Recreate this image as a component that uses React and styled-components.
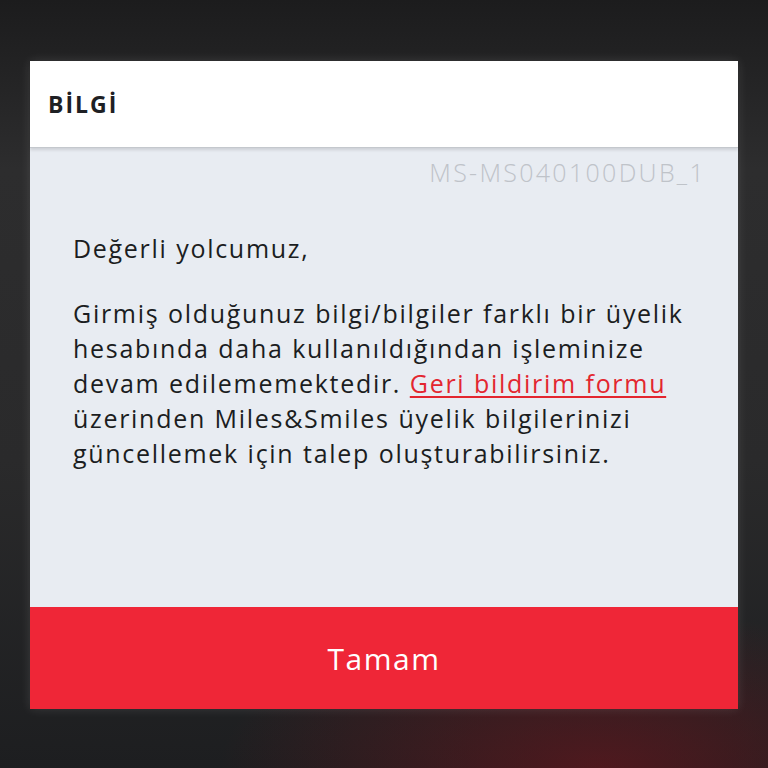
import { createGlobalStyle, styled } from "styled-components";

const GlobalStyle = createGlobalStyle`
  html, body {
    margin: 0;
    padding: 0;
  }
  body {
    font-family: "Open Sans", Lato, "DejaVu Sans", sans-serif;
  }
`;

const Screen = styled.div`
  width: 768px;
  height: 768px;
  box-sizing: border-box;
  padding: 61px 30px 0;
  background:
    radial-gradient(ellipse 380px 160px at 600px 768px, rgba(120, 20, 28, 0.55), rgba(120, 20, 28, 0) 100%),
    linear-gradient(180deg, #1c1c1d 0%, #2d2d2e 22%, #2a2a2b 60%, #1d1e20 100%);
  overflow: hidden;
`;

const Dialog = styled.div`
  width: 708px;
  display: flex;
  flex-direction: column;
  box-shadow: 0 0 10px rgba(255, 255, 255, 0.12);
`;

const Header = styled.div`
  height: 86px;
  background: #ffffff;
  display: flex;
  align-items: center;
  padding-left: 18px;
  border-bottom: 1px solid #c4c8cd;
  box-shadow: 0 2px 3px rgba(0, 0, 0, 0.12);
  position: relative;
  z-index: 1;
`;

const Title = styled.h1`
  margin: 0;
  font-size: 23px;
  font-weight: 700;
  color: #1e2024;
  letter-spacing: 2px;
`;

const Body = styled.div`
  height: 459px;
  background: #e8ecf2;
  display: flex;
  flex-direction: column;
`;

const Code = styled.div`
  text-align: right;
  padding: 10px 32px 0 0;
  font-size: 25px;
  font-weight: 300;
  color: #bfc3c9;
  line-height: 28px;
  letter-spacing: 2.3px;
`;

const Content = styled.div`
  padding: 45px 30px 0 43px;
  color: #1b1d21;
  font-size: 25px;
  line-height: 35px;
  letter-spacing: 1.7px;
  word-spacing: 0.5px;
`;

const Paragraph = styled.p`
  margin: 0 0 ${(p) => p.$gap || 0}px;
`;

const Link = styled.a`
  color: #e3262f;
  text-decoration: underline;
  text-underline-offset: 3px;
  text-decoration-thickness: 2px;
`;

const Button = styled.button`
  height: 102px;
  border: none;
  background: #ef2637;
  color: #ffffff;
  font-family: inherit;
  font-size: 30px;
  letter-spacing: 1.5px;
  padding: 0;
  cursor: pointer;
`;

export default function App() {
  return (
    <>
      <GlobalStyle />
      <Screen>
        <Dialog>
          <Header>
            <Title>BİLGİ</Title>
          </Header>
          <Body>
            <Code>MS-MS040100DUB_1</Code>
            <Content>
              <Paragraph $gap={30}>Değerli yolcumuz,</Paragraph>
              <Paragraph>
                Girmiş olduğunuz bilgi/bilgiler farklı bir üyelik hesabında daha
                kullanıldığından işleminize devam edilememektedir.{" "}
                <Link href="#">Geri bildirim formu</Link> üzerinden Miles&amp;Smiles
                üyelik bilgilerinizi güncellemek için talep oluşturabilirsiniz.
              </Paragraph>
            </Content>
          </Body>
          <Button>Tamam</Button>
        </Dialog>
      </Screen>
    </>
  );
}
